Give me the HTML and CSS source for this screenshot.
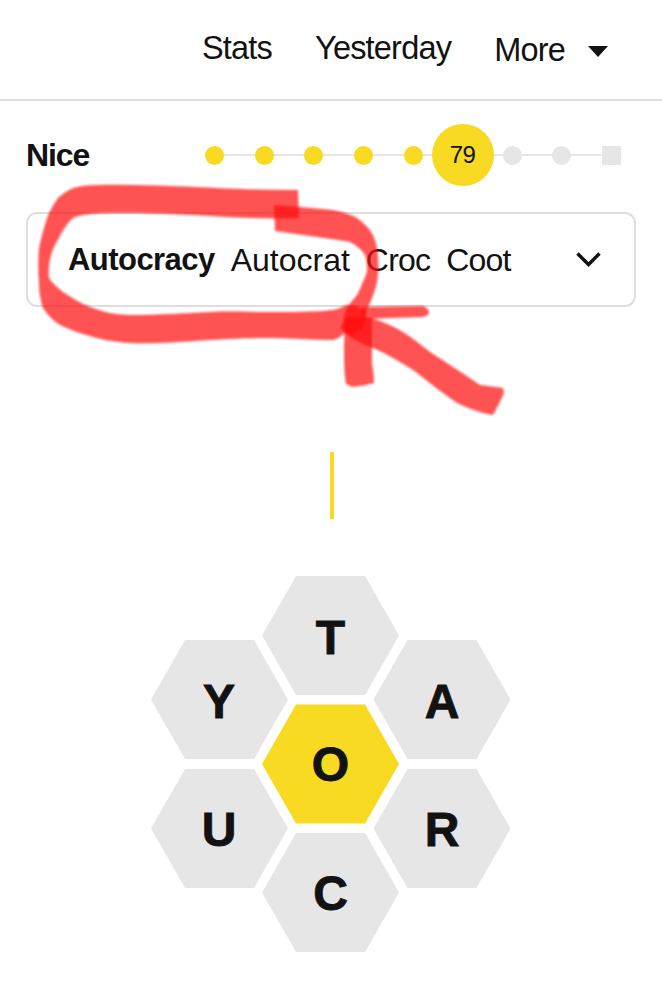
FILE: index.html
```html
<!DOCTYPE html>
<html lang="en">
<head>
<meta charset="utf-8">
<title>Spelling Bee</title>
<link rel="stylesheet" href="styles.css">
</head>
<body>
<div class="page">
  <header class="topbar">
    <a class="nav-link">Stats</a>
    <a class="nav-link">Yesterday</a>
    <a class="nav-link nav-more">More
      <svg class="caret" viewBox="0 0 20 11" width="20" height="11"><polygon points="0,0 20,0 10,11"/></svg>
    </a>
  </header>

  <section class="progress">
    <h2 class="rank">Nice</h2>
    <div class="track">
      <span class="step"><i class="dot on"></i></span>
      <span class="step"><i class="dot on"></i></span>
      <span class="step"><i class="dot on"></i></span>
      <span class="step"><i class="dot on"></i></span>
      <span class="step"><i class="dot on"></i></span>
      <span class="step"><i class="score">79</i></span>
      <span class="step"><i class="dot"></i></span>
      <span class="step"><i class="dot"></i></span>
      <span class="step"><i class="dot square"></i></span>
    </div>
  </section>

  <section class="words">
    <span class="word first">Autocracy</span>
    <span class="word second">Autocrat</span>
    <span class="word">Croc</span>
    <span class="word">Coot</span>
    <svg class="chevron" viewBox="0 0 25 15" width="25" height="15"><polyline points="1.5,1.5 12.500,12.500 23.500,1.5"/></svg>
  </section>

  <div class="cursor"></div>

  <svg class="hive" viewBox="151 576 360 377" width="360" height="377">
    <g class="cell"><polygon points="262,635.5 296,576 365,576 399,635.5 365,695 296,695"/><text x="330.5" y="654">T</text></g>
    <g class="cell"><polygon points="151,699.5 185,640 254,640 288,699.5 254,759 185,759"/><text x="219" y="718">Y</text></g>
    <g class="cell"><polygon points="373.500,699.500 407.500,640 476.500,640 510.500,699.500 476.500,759 407.500,759"/><text x="442" y="718">A</text></g>
    <g class="cell center"><polygon points="262,764 296,704.500 365,704.500 399,764 365,823.500 296,823.500"/><text x="330.500" y="781">O</text></g>
    <g class="cell"><polygon points="151,828.500 185,769 254,769 288,828.500 254,888 185,888"/><text x="219" y="846">U</text></g>
    <g class="cell"><polygon points="373.500,828.500 407.500,769 476.500,769 510.500,828.500 476.500,888 407.500,888"/><text x="442" y="846">R</text></g>
    <g class="cell"><polygon points="262,892.500 296,833 365,833 399,892.500 365,952 296,952"/><text x="330.500" y="910">C</text></g>
  </svg>

  <svg class="scribble" viewBox="0 0 662 1000" width="662" height="1000">
    <defs><filter id="soft" x="-5%" y="-5%" width="110%" height="110%"><feGaussianBlur stdDeviation="0.9"/></filter></defs>
    <g filter="url(#soft)">
      <path class="ink" d="M298,190 L299,218 C270,219 240,218 210,216 C180,214 150,213 130,213 C110,213 98,213 90,214 C82,215 78,216 73,218 C68,223 65,227 62,232 C58,240 54,246 52,252 C49,262 48,270 49,278 C53,284 58,288 63,292 C72,298 80,303 90,307 C103,312 116,315 130,315 C160,315 185,313 210,312 C230,311 250,312 267,312 C290,312 315,312 333,310 C338,309 341,308 346,305 C354,305 361,306 366,312 C368,320 364,328 358,331 C353,334 349,335 344,333 C341,337 337,339 333,340 C310,340 288,338 267,338 C245,338 228,339 210,340 C180,342 155,344 130,343 C118,342 108,341 97,338 C82,334 70,330 60,325 C52,320 47,314 43,308 C40,298 39,292 39,282 C38,270 38,260 39,248 C41,238 44,228 47,218 C50,210 54,204 58,198 C62,194 67,191 73,188 C80,186 88,185 97,185 C130,184 165,186 197,187 C230,189 265,190 298,190 Z"/>
      <path class="ink" d="M274,205 C283,206 292,206 300,207 C312,208 323,209 333,210 C342,212 350,214 357,218 C364,223 369,228 373,235 C376,242 378,250 378,258 C379,266 378,274 377,282 C375,290 373,296 370,303 C367,310 364,316 360,322 L343,322 C344,317 345,312 347,308 C350,303 353,300 357,295 C361,287 364,280 367,272 C367,265 367,260 365,255 C361,249 356,245 350,242 C340,240 330,239 317,237 C303,235 289,233 275,231 Z"/>
      <path class="ink" d="M345,320 L372,318 L372,363 C373,370 374,377 374,383 C367,385 360,386 353,387 C350,386 348,385 346,384 C344,372 344,360 344,345 Z"/>
      <path class="ink" d="M372,318 C383,322 393,326 403,332 C413,338 421,345 430,352 C447,363 464,374 480,385 C488,386 496,387 503,388 L504,393 C501,400 497,408 493,415 C490,414 486,414 483,413 C474,410 465,407 457,403 C442,393 428,381 413,370 C400,362 387,354 373,348 C365,345 357,341 350,337 C346,334 343,331 340,327 L348,316 Z"/>
      <path class="ink" d="M362,307 L423,306 C426,307 429,310 429,312 C429,315 426,316 423,317 L362,319 Z"/>
    </g>
  </svg>
</div>
</body>
</html>
```
FILE: styles.css
```css
* {
  box-sizing: border-box;
}

html,
body {
  margin: 0;
  padding: 0;
  background: #fff;
}

.page {
  position: relative;
  width: 662px;
  height: 1000px;
  overflow: hidden;
  font-family: "Liberation Sans", Arial, sans-serif;
  color: #121212;
}

.topbar {
  display: flex;
  justify-content: flex-end;
  align-items: flex-start;
  gap: 43px;
  height: 101px;
  padding: 29px 54px 0 0;
  border-bottom: 2px solid #e0e0e0;
}

.nav-link {
  font-size: 32.5px;
  line-height: 38px;
  letter-spacing: -0.8px;
}

.nav-more {
  display: flex;
  align-items: center;
  gap: 23px;
  margin-top: 2px;
}

.caret {
  margin-top: 3px;
  fill: #121212;
}

.progress {
  display: flex;
  align-items: center;
  justify-content: space-between;
  height: 62px;
  margin-top: 23px;
  padding: 0 26px;
}

.rank {
  margin: 0;
  font-size: 32px;
  font-weight: 700;
  letter-spacing: -1.1px;
}

.track {
  position: relative;
  display: flex;
  width: 446px;
}

.track::before {
  content: "";
  position: absolute;
  left: 25px;
  right: 25px;
  top: 30px;
  height: 2px;
  background: #e6e6e6;
}

.step {
  position: relative;
  display: flex;
  align-items: center;
  justify-content: center;
  flex: 1 1 0;
  min-width: 0;
  height: 62px;
}

.dot {
  display: block;
  width: 19px;
  height: 19px;
  border-radius: 50%;
  background: #e6e6e6;
}

.dot.on {
  background: #f7da21;
}

.dot.square {
  border-radius: 0;
}

.score {
  flex: none;
  width: 62px;
  height: 62px;
  border-radius: 50%;
  background: #f7da21;
  font-style: normal;
  font-size: 24px;
  letter-spacing: -0.5px;
  line-height: 62px;
  text-align: center;
}

.words {
  display: flex;
  align-items: center;
  gap: 16px;
  height: 95px;
  margin: 26px 26px 0;
  padding: 0 33px 0 40px;
  border: 2px solid #dedede;
  border-radius: 11px;
}

.word {
  font-size: 32px;
  line-height: 38px;
  letter-spacing: -0.8px;
}

.word.first {
  font-size: 31px;
  font-weight: 700;
  letter-spacing: -0.55px;
}

.word.second {
  letter-spacing: 0;
}

.chevron {
  margin-left: auto;
  fill: none;
  stroke: #121212;
  stroke-width: 3.4;
}

.cursor {
  width: 4px;
  height: 67px;
  margin: 145px 0 0 330px;
  background: #f7da21;
}

.hive {
  display: block;
  margin: 57px 0 0 151px;
}

.cell polygon {
  fill: #e6e6e6;
}

.cell.center polygon {
  fill: #f7da21;
}

.cell text {
  font-family: "Liberation Sans", Arial, sans-serif;
  font-size: 48px;
  font-weight: 700;
  text-anchor: middle;
  fill: #121212;
  stroke: #121212;
  stroke-width: 0.9;
}

.scribble {
  position: absolute;
  left: 0;
  top: 0;
  pointer-events: none;
}

.ink {
  fill: #ff0f0f;
  opacity: 0.72;
}
```
